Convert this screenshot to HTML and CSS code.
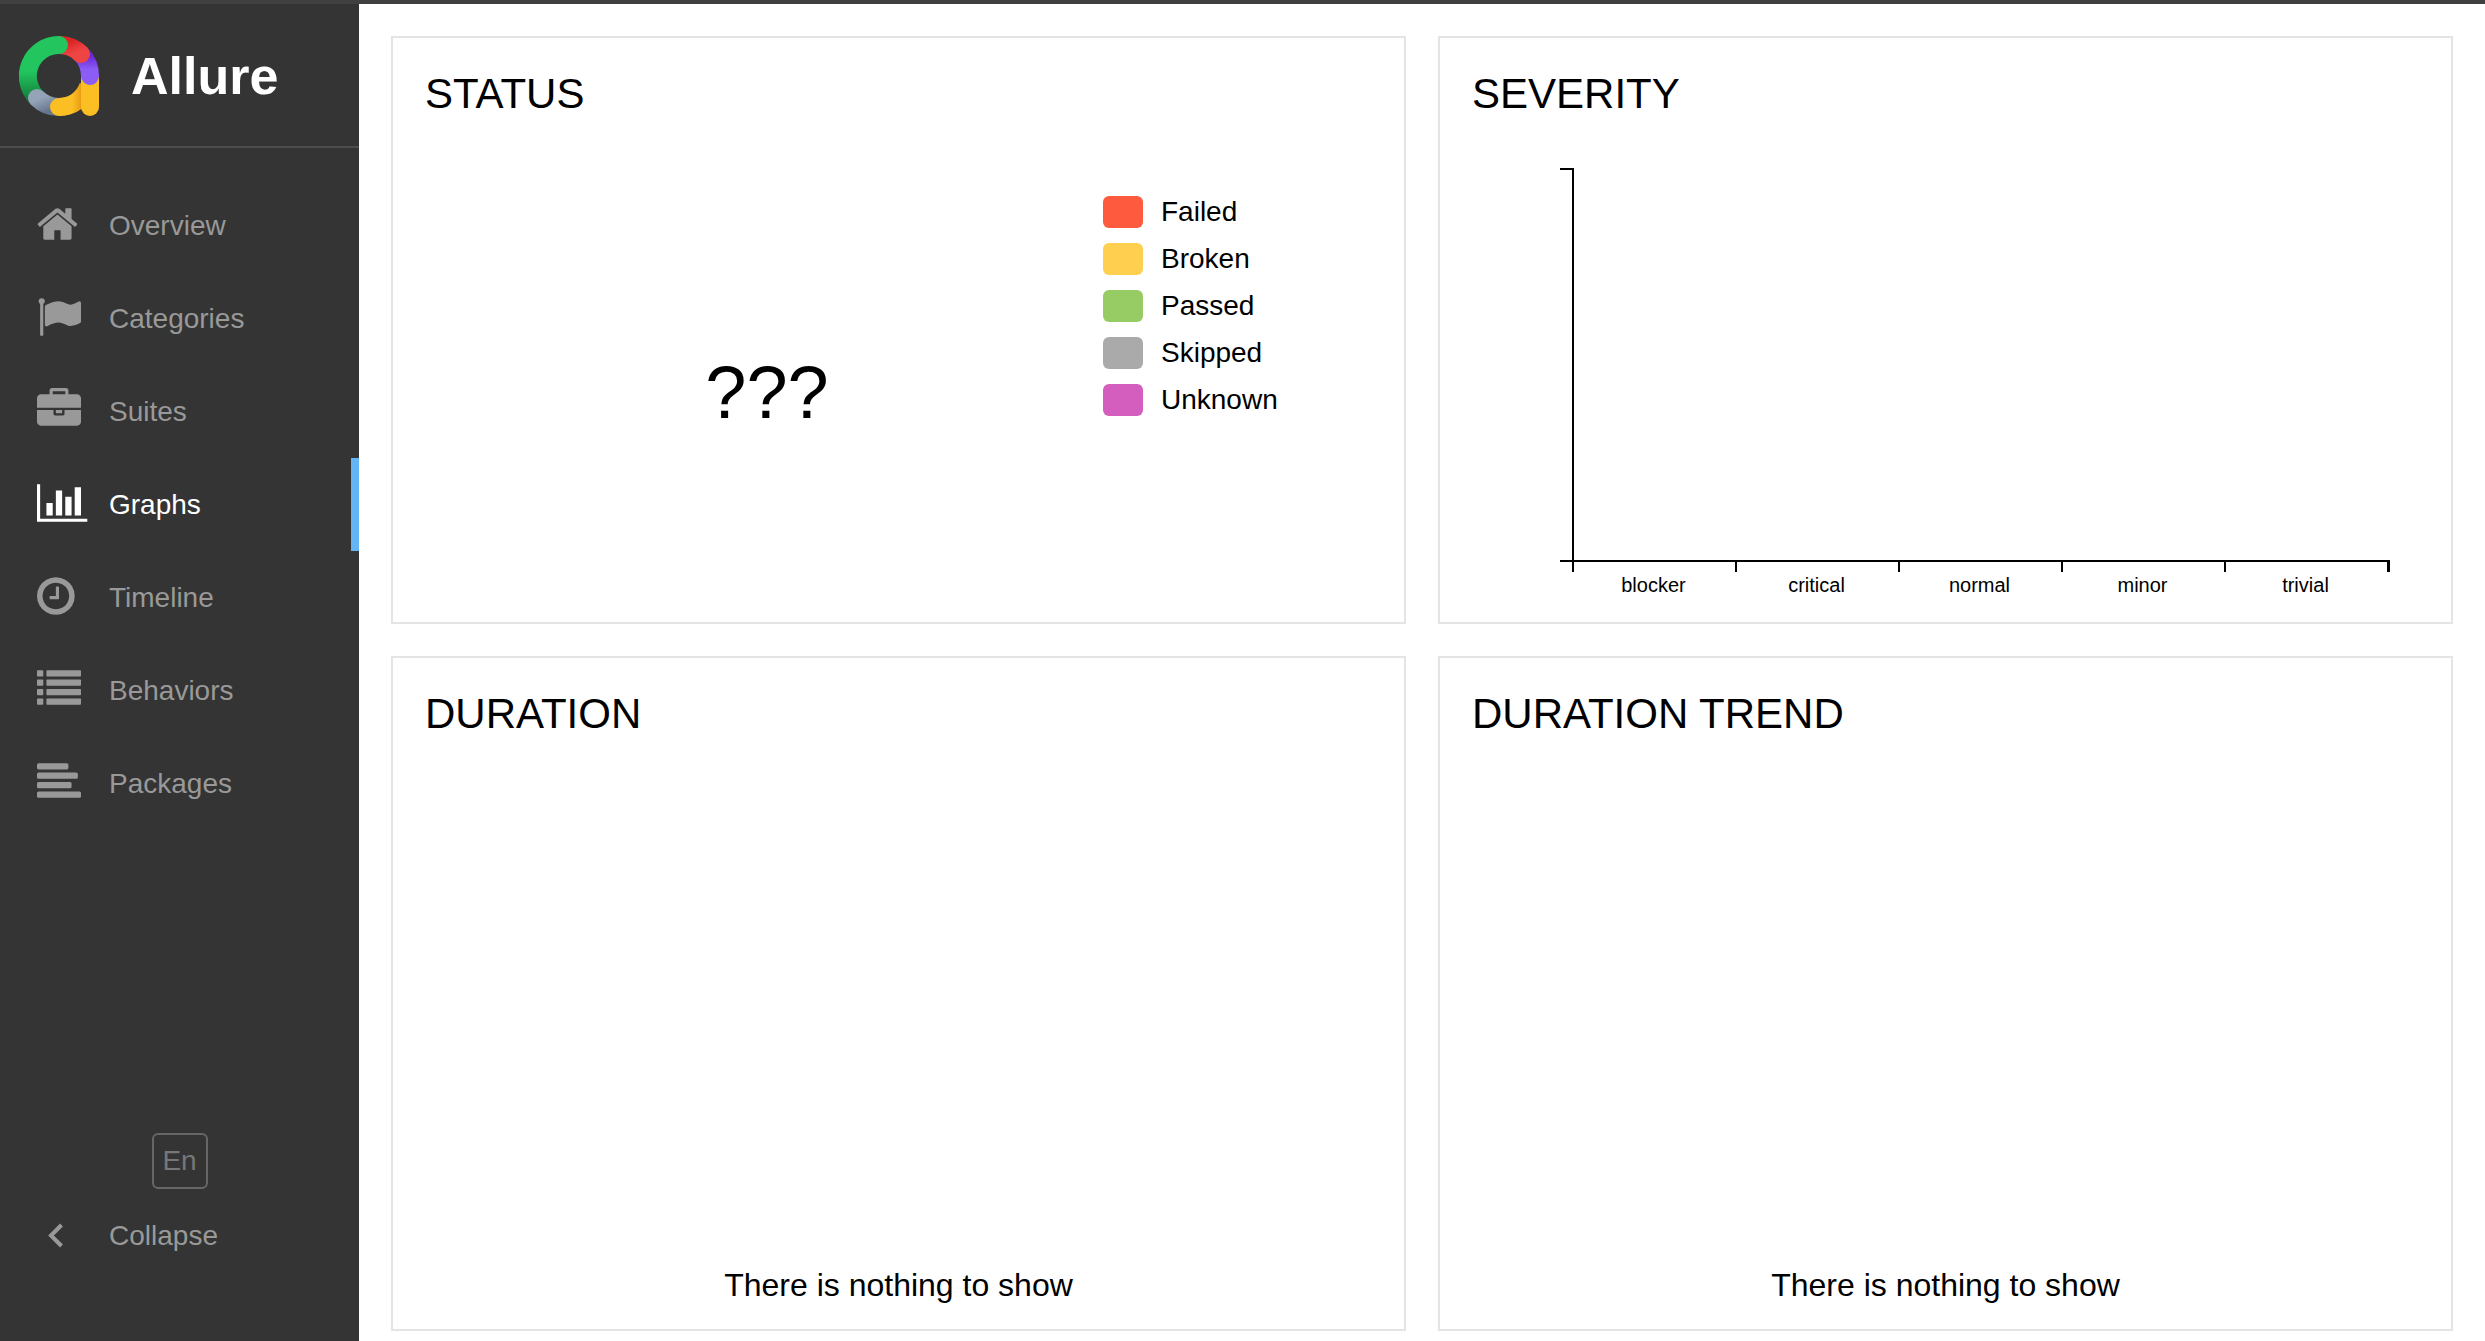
FILE: index.html
```html
<!DOCTYPE html>
<html lang="en">
<head>
<meta charset="utf-8">
<title>Allure Report</title>
<link rel="stylesheet" href="styles.css">
</head>
<body>
<div class="app">
  <aside class="side">
    <a class="brand" href="#">
      <svg class="brand-logo" viewBox="0 0 240 240" aria-hidden="true">
        <defs>
          <linearGradient id="green" x1="0" y1="0" x2="0" y2="1"><stop offset=".5" stop-color="#22c55e"/><stop offset="1" stop-color="#15803d"/></linearGradient>
          <linearGradient id="red" x1="0" y1="0" x2="1" y2="1"><stop offset=".1" stop-color="#dc2626"/><stop offset=".8" stop-color="#ef4444"/></linearGradient>
          <linearGradient id="violet" x1="0" y1="0" x2="0" y2="1"><stop offset=".1" stop-color="#6d28d9"/><stop offset=".7" stop-color="#8b5cf6"/></linearGradient>
          <linearGradient id="amber" x1="0" y1="0" x2="1" y2="0"><stop offset=".45" stop-color="#fbbf24"/><stop offset="1" stop-color="#d98206"/></linearGradient>
          <linearGradient id="slate" x1="0" y1="0" x2="1" y2="1"><stop offset=".1" stop-color="#94a3b8"/><stop offset="1" stop-color="#64748b"/></linearGradient>
        </defs>
        <g fill="none" stroke-width="54" stroke-linecap="round">
          <path stroke="url(#amber)" d="M120 213A93 93 0 0 0 208 150" stroke-linecap="butt"/>
          <path stroke="#fbbf24" d="M213 125V213"/>
          <path stroke="url(#violet)" d="M186 54A93 93 0 0 1 213 120"/>
          <path stroke="url(#red)" d="M120 27A93 93 0 0 1 186 54"/>
          <path stroke="url(#green)" d="M54 186A93 93 0 0 1 120 27"/>
          <path stroke="url(#slate)" d="M54 186A93 93 0 0 0 120 213"/>
          <path stroke="#fbbf24" d="M120 213A93 93 0 0 0 150 208" stroke-linecap="butt"/>
          <circle cx="120" cy="213" r="27" fill="#fbbf24" stroke="none"/>
        </g>
      </svg>
      <span class="brand-name">Allure</span>
    </a>
    <nav class="menu">
      <a class="menu-item" href="#">
        <svg class="icon" viewBox="64 0 2118 1792" aria-hidden="true"><path d="M1472 992v480q0 26-19 45t-45 19h-384v-384h-256v384h-384q-26 0-45-19t-19-45v-480q0-1 .5-3t.5-3l575-474 575 474q1 2 1 6zm223-69l-62 74q-8 9-21 11h-3q-13 0-21-7l-692-577-692 577q-12 8-24 7-13-2-21-11l-62-74q-8-10-7-23.5t11-21.5l719-599q32-26 76-26t76 26l244 204v-195q0-14 9-23t23-9h192q14 0 23 9t9 23v408l219 182q10 8 11 21.5t-7 23.5z"/></svg>
        <span>Overview</span>
      </a>
      <a class="menu-item" href="#">
        <svg class="icon" viewBox="0 0 2118 1792" aria-hidden="true"><path d="M320 256q0 72-64 110v1266q0 13-9.500 22.500t-22.500 9.500h-64q-13 0-22.500-9.500t-9.500-22.500v-1266q-64-38-64-110 0-53 37.500-90.500t90.500-37.500 90.500 37.500 37.500 90.500zm1472 64v763q0 25-12.500 38.500t-39.500 27.500q-215 116-369 116-61 0-123.500-22t-108.500-48-115.500-48-142.500-22q-192 0-464 146-17 9-33 9-26 0-45-19t-19-45v-742q0-32 31-55 21-14 79-43 236-120 421-120 107 0 200 29t219 88q38 19 88 19 54 0 117.500-21t110-47 88-47 54.500-21q26 0 45 19t19 45z"/></svg>
        <span>Categories</span>
      </a>
      <a class="menu-item" href="#">
        <svg class="icon" viewBox="0 0 2118 1792" aria-hidden="true"><path d="M640 256h512v-128h-512v128zm1152 640v480q0 66-47 113t-113 47h-1472q-66 0-113-47t-47-113v-480h672v160q0 26 19 45t45 19h320q26 0 45-19t19-45v-160h672zm-768 0v128h-256v-128h256zm768-480v384h-1792v-384q0-66 47-113t113-47h352v-160q0-40 28-68t68-28h576q40 0 68 28t28 68v160h352q66 0 113 47t47 113z"/></svg>
        <span>Suites</span>
      </a>
      <a class="menu-item menu-item-active" href="#" aria-current="page">
        <svg class="icon" viewBox="0 0 2118 1792" aria-hidden="true"><path d="M640 896v512h-256v-512h256zm384-512v1024h-256v-1024h256zm1024 1152v128h-2048v-1536h128v1408h1920zm-640-896v768h-256v-768h256zm384-384v1152h-256v-1152h256z"/></svg>
        <span>Graphs</span>
      </a>
      <a class="menu-item" href="#">
        <svg class="icon" viewBox="128 0 2118 1792" aria-hidden="true"><path d="M1024 544v448q0 14-9 23t-23 9h-320q-14 0-23-9t-9-23v-64q0-14 9-23t23-9h224v-352q0-14 9-23t23-9h64q14 0 23 9t9 23zm416 352q0-148-73-273t-198-198-273-73-273 73-198 198-73 273 73 273 198 198 273 73 273-73 198-198 73-273zm224 0q0 209-103 385.500t-279.500 279.500-385.500 103-385.500-103-279.500-279.500-103-385.500 103-385.500 279.500-279.500 385.500-103 385.500 103 279.500 279.500 103 385.500z"/></svg>
        <span>Timeline</span>
      </a>
      <a class="menu-item" href="#">
        <svg class="icon" viewBox="0 0 2118 1792" aria-hidden="true">
          <rect y="128" width="256" height="256" rx="32"/><rect x="384" y="128" width="1408" height="256" rx="32"/>
          <rect y="512" width="256" height="256" rx="32"/><rect x="384" y="512" width="1408" height="256" rx="32"/>
          <rect y="896" width="256" height="256" rx="32"/><rect x="384" y="896" width="1408" height="256" rx="32"/>
          <rect y="1280" width="256" height="256" rx="32"/><rect x="384" y="1280" width="1408" height="256" rx="32"/>
        </svg>
        <span>Behaviors</span>
      </a>
      <a class="menu-item" href="#">
        <svg class="icon" viewBox="0 0 2118 1792" aria-hidden="true">
          <rect y="128" width="1280" height="256" rx="64"/>
          <rect y="512" width="1664" height="256" rx="64"/>
          <rect y="896" width="1408" height="256" rx="64"/>
          <rect y="1280" width="1792" height="256" rx="64"/>
        </svg>
        <span>Packages</span>
      </a>
    </nav>
    <div class="side-footer">
      <button class="language" type="button" aria-label="Language: En">En</button>
      <button class="menu-item collapse" type="button">
        <svg class="icon" viewBox="0 0 52 44" aria-hidden="true"><path class="icon-line" d="M24.500 13L14 23.500L24.500 34"/></svg>
        <span>Collapse</span>
      </button>
    </div>
  </aside>
  <main class="content">
    <section class="panel">
      <h2 class="panel-title">STATUS</h2>
      <div class="status">
        <div class="status-total">???</div>
        <ul class="legend">
          <li class="legend-row"><span class="swatch swatch-failed"></span>Failed</li>
          <li class="legend-row"><span class="swatch swatch-broken"></span>Broken</li>
          <li class="legend-row"><span class="swatch swatch-passed"></span>Passed</li>
          <li class="legend-row"><span class="swatch swatch-skipped"></span>Skipped</li>
          <li class="legend-row"><span class="swatch swatch-unknown"></span>Unknown</li>
        </ul>
      </div>
    </section>
    <section class="panel">
      <h2 class="panel-title">SEVERITY</h2>
      <div class="severity">
        <div class="y-axis"></div>
        <ol class="x-axis">
          <li>blocker</li>
          <li>critical</li>
          <li>normal</li>
          <li>minor</li>
          <li>trivial</li>
        </ol>
      </div>
    </section>
    <section class="panel">
      <h2 class="panel-title">DURATION</h2>
      <p class="empty">There is nothing to show</p>
    </section>
    <section class="panel">
      <h2 class="panel-title">DURATION TREND</h2>
      <p class="empty">There is nothing to show</p>
    </section>
  </main>
</div>
</body>
</html>
```
FILE: styles.css
```css
* {
  box-sizing: border-box;
}

body {
  margin: 0;
  font-family: "Liberation Sans", Arial, sans-serif;
  font-size: 28px;
  line-height: 32px;
  color: #000;
  background: #fff;
}

.app {
  display: flex;
  min-height: 100vh;
  border-top: 4px solid #404040;
}

.side {
  flex: none;
  display: flex;
  flex-direction: column;
  width: 359px;
  background: #343434;
}

.brand {
  display: flex;
  align-items: center;
  gap: 32px;
  height: 144px;
  padding: 2px 0 0 19px;
  border-bottom: 2px solid #4d4d4d;
  color: #fff;
  text-decoration: none;
}

.brand-logo {
  width: 80px;
  height: 80px;
}

.brand-name {
  font-size: 52px;
  font-weight: bold;
  line-height: 60px;
}

.menu {
  padding-top: 31px;
}

.menu-item {
  display: flex;
  align-items: center;
  gap: 20px;
  width: 100%;
  height: 93px;
  padding: 0 0 0 37px;
  color: #999;
  text-decoration: none;
}

.menu-item-active {
  color: #fff;
  border-right: 8px solid #64b5f6;
}

.icon {
  flex: none;
  width: 52px;
  height: 44px;
  margin-bottom: 4px;
  fill: currentColor;
}

.icon-line {
  fill: none;
  stroke: currentColor;
  stroke-width: 4;
}

.side-footer {
  display: flex;
  flex-direction: column;
  align-items: center;
  margin-top: auto;
  padding-bottom: 59px;
}

.language {
  width: 56px;
  height: 56px;
  padding: 0;
  border: 2px solid #666;
  border-radius: 6px;
  background: none;
  color: #777;
  font: inherit;
}

.collapse {
  border: 0;
  background: none;
  font: inherit;
  text-align: left;
}

.content {
  flex: 1;
  display: grid;
  grid-template-columns: 1fr 1fr;
  grid-template-rows: 588px 1fr;
  gap: 32px;
  padding: 32px 32px 10px;
}

.panel {
  display: flex;
  flex-direction: column;
  padding: 32px;
  border: 2px solid #e4e4e4;
}

.panel-title {
  margin: 0;
  font-size: 42px;
  font-weight: normal;
  line-height: 48px;
}

.status {
  display: flex;
}

.status-total {
  flex: 1;
  padding: 235px 0 0 6px;
  font-size: 74px;
  line-height: 80px;
  text-align: center;
}

.legend {
  display: flex;
  flex-direction: column;
  gap: 15px;
  width: 269px;
  margin: 0;
  padding: 78px 0 0;
  list-style: none;
}

.legend-row {
  display: flex;
  align-items: center;
  gap: 18px;
}

.swatch {
  width: 40px;
  height: 32px;
  border-radius: 6px;
}

.swatch-failed {
  background: #fd5a3e;
}

.swatch-broken {
  background: #ffd050;
}

.swatch-passed {
  background: #97cc64;
}

.swatch-skipped {
  background: #aaa;
}

.swatch-unknown {
  background: #d35ebe;
}

.severity {
  padding: 50px 29px 0 88px;
}

.y-axis {
  width: 14px;
  height: 392px;
  border-top: 2px solid #000;
  border-right: 2px solid #000;
}

.x-axis {
  display: grid;
  grid-template-columns: repeat(5, 1fr);
  margin: 0;
  padding: 0 3px 0 12px;
  border-top: 2px solid #000;
  list-style: none;
  font-size: 20px;
  line-height: 26px;
  text-align: center;
}

.x-axis li::before {
  content: "";
  display: block;
  height: 10px;
  border-left: 2px solid #000;
}

.x-axis li:last-child::before {
  margin-right: -3px;
  border-right: 3px solid #000;
}

.empty {
  margin: auto 0 0;
  font-size: 32px;
  line-height: 24px;
  text-align: center;
}
```
